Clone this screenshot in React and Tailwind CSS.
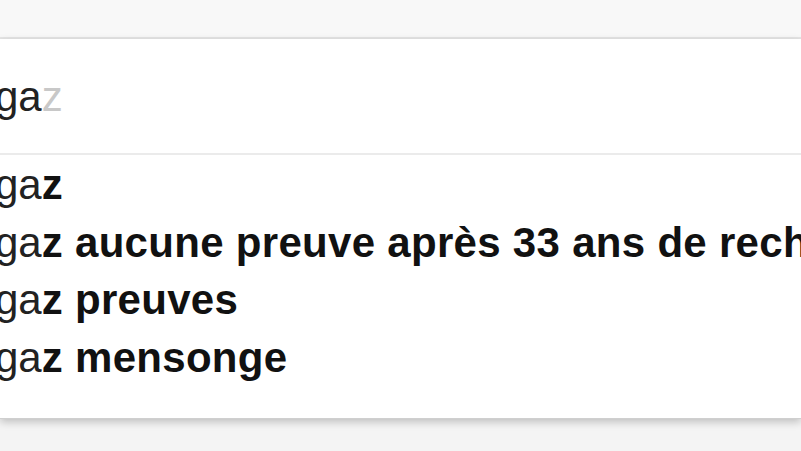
const suggestions = [
  "",
  " aucune preuve après 33 ans de recherche",
  " preuves",
  " mensonge",
];

const SuggestRow = ({ rest }) => (
  <div className="ml-[-5px] whitespace-nowrap leading-[57.5px]">
    <span className="text-[#222]">ga</span>
    <span className="font-bold tracking-[0.3px] text-[#111]">z{rest}</span>
  </div>
);

const App = () => {
  return (
    <div
      className="h-[451px] w-[801px] overflow-hidden bg-[#f4f4f4] text-[42px]"
      style={{ fontFamily: '"Liberation Sans", Arial, sans-serif' }}
    >
      <div className="h-[39px] border-b-2 border-[#e6e6e6] bg-[#f8f8f8]" />
      <div className="bg-white shadow-[0_3px_8px_rgba(0,0,0,0.22)]">
        <div className="h-[116px] border-b-2 border-[#ebebeb] pt-[2px] leading-[112px]">
          <div className="ml-[-5px] whitespace-nowrap">
            <span className="text-[#222]">ga</span>
            <span className="text-[#c8c8c8]">z</span>
          </div>
        </div>
        <div className="border-b border-[#cfcfcf] pb-[32px] pt-[1px]">
          {suggestions.map((rest, i) => (
            <SuggestRow key={i} rest={rest} />
          ))}
        </div>
      </div>
    </div>
  );
};

export default App;
